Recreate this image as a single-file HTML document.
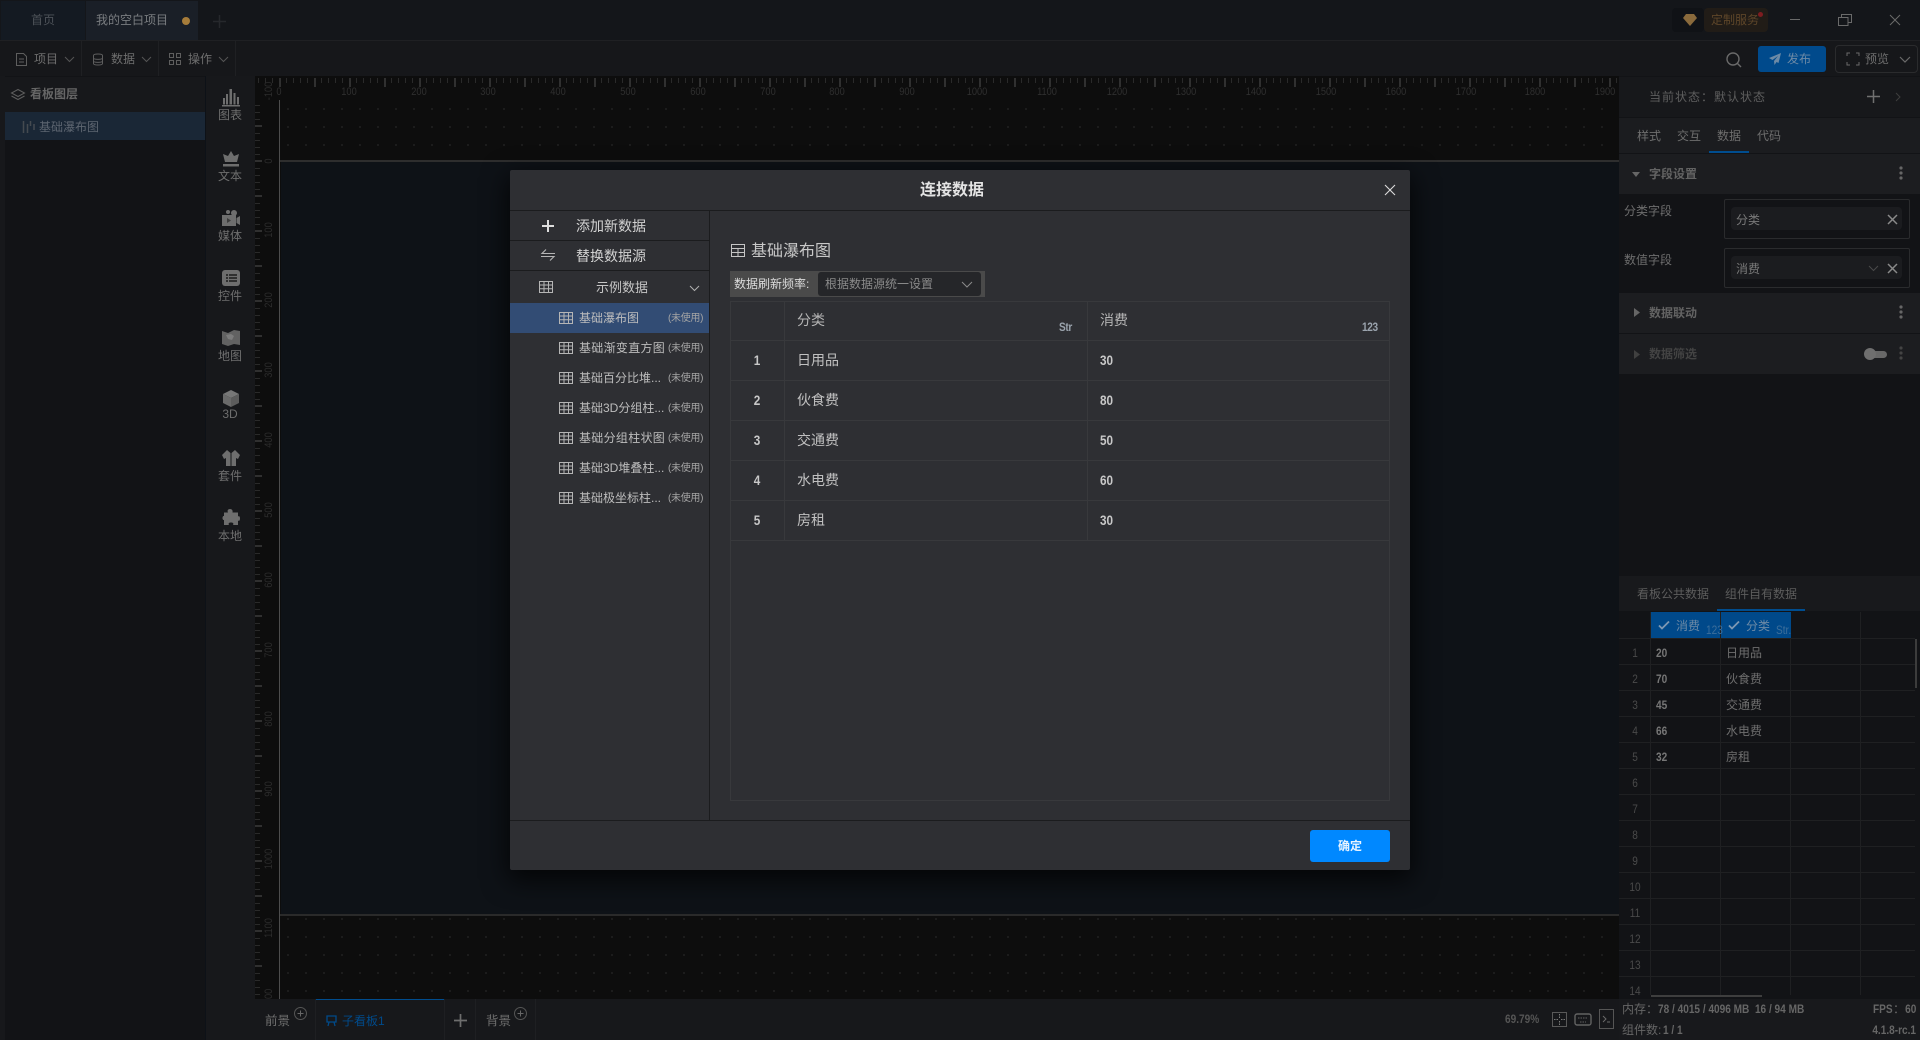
<!DOCTYPE html>
<html lang="zh"><head><meta charset="utf-8"><title>连接数据</title>
<style>
html,body{margin:0;padding:0;width:1920px;height:1040px;overflow:hidden;background:#0d1117}
body{position:relative;font-family:"Liberation Sans","Noto Sans CJK SC",sans-serif;font-size:12px;color:#6e6e6e}
.b{position:absolute}
.t{position:absolute;white-space:nowrap;line-height:20px;margin-top:-10px}
.c{transform:translateX(-50%)}
.n{transform:scaleX(.84);transform-origin:left center}
.c.n{transform:translateX(-50%) scaleX(.84);transform-origin:center}
.e{transform:scaleX(.84);transform-origin:right center}
.m{font-weight:700}
.r{position:absolute;white-space:nowrap;font-size:11px;line-height:12px;color:#2f2f2f;transform:translateX(-50%) scaleX(.84)}
.rv{position:absolute;left:269px;white-space:nowrap;font-size:11px;line-height:12px;color:#2c2c2c;transform:translate(-50%,-50%) rotate(-90deg) scaleX(.84)}
svg{position:absolute;overflow:visible}
.u{color:#bdbdbd;font-size:12px}
.un{color:#a5a5a5;font-size:10px;letter-spacing:-.3px;margin-top:-9px}
.num{color:#4a4a4a}
</style></head><body>

<!-- background panels -->
<div class="b" style="left:0;top:0;width:1920px;height:40px;background:#14161a"></div>
<div class="b" style="left:0;top:40px;width:1920px;height:1px;background:#1f2023"></div>
<div class="b" style="left:1px;top:1px;width:84px;height:39px;background:#141a22"></div>
<div class="b" style="left:86px;top:1px;width:112px;height:39px;background:#1a1f27"></div>
<div class="b" style="left:0;top:41px;width:1920px;height:35px;background:#16171a"></div>
<div class="b" style="left:81px;top:41px;width:1px;height:35px;background:#1f2023"></div>
<div class="b" style="left:158px;top:41px;width:1px;height:35px;background:#1f2023"></div>
<div class="b" style="left:235px;top:41px;width:1px;height:35px;background:#1f2023"></div>
<div class="b" style="left:0;top:76px;width:5px;height:964px;background:#17181b"></div>
<div class="b" style="left:5px;top:76px;width:200px;height:964px;background:#121316"></div>
<div class="b" style="left:5px;top:77px;width:200px;height:35px;background:#17181b"></div>
<div class="b" style="left:5px;top:112px;width:200px;height:28px;background:#1a2736"></div>
<div class="b" style="left:206px;top:76px;width:49px;height:964px;background:#17181b"></div>
<div class="b" style="left:255px;top:76px;width:1364px;height:923px;background:#0d0d0d"></div>
<div class="b" style="left:281px;top:162px;width:1338px;height:752px;background:#0e1217"></div>
<div class="b" style="left:255px;top:999px;width:1364px;height:41px;background:#17181b"></div>
<div class="b" style="left:1619px;top:76px;width:301px;height:964px;background:#121316"></div>

<svg style="left:0;top:0" width="1920" height="1040">
<defs>
<pattern id="tx" x="279" y="76" width="35" height="24" patternUnits="userSpaceOnUse">
<rect x="0" y="2" width="2" height="9" fill="#303030"/><rect x="7" y="2" width="1" height="5" fill="#2a2a2a"/><rect x="14" y="2" width="1" height="5" fill="#2a2a2a"/><rect x="21" y="2" width="1" height="5" fill="#2a2a2a"/><rect x="28" y="2" width="1" height="5" fill="#2a2a2a"/>
</pattern>
<pattern id="ty" x="255" y="161" width="25" height="35" patternUnits="userSpaceOnUse">
<rect x="0" y="-1" width="7" height="2" fill="#303030"/><rect x="0" y="34" width="7" height="2" fill="#303030"/><rect x="0" y="7" width="5" height="1" fill="#2a2a2a"/><rect x="0" y="14" width="5" height="1" fill="#2a2a2a"/><rect x="0" y="21" width="5" height="1" fill="#2a2a2a"/><rect x="0" y="28" width="5" height="1" fill="#2a2a2a"/>
</pattern>
<pattern id="dt" x="287" y="108" width="18" height="18" patternUnits="userSpaceOnUse"><rect width="2" height="2" fill="#1c1c1c"/></pattern>
<g id="grid"><path d="M.5 .5h13v11H.5zM.5 4h13M.5 7.7h13M5 .5v11M9.500 .5v11" fill="none" stroke="#b5b5b5" stroke-width="1"/></g>
<path id="cv" d="M0 0l4.500 4.500L9 0" fill="none" stroke-width="1"/>
</defs>
<rect x="255" y="76" width="1364" height="24" fill="url(#tx)"/>
<rect x="255" y="100" width="25" height="899" fill="url(#ty)"/>
<rect x="281" y="101" width="1338" height="59" fill="url(#dt)"/>
<rect x="281" y="916" width="1338" height="83" fill="url(#dt)"/>
<rect x="279" y="100" width="1" height="899" fill="#4d4d4d"/>
<rect x="280" y="160" width="1339" height="2" fill="#2e2e2e"/>
<rect x="280" y="914" width="1339" height="2" fill="#2a2a2a"/>
</svg>

<!-- rulers text -->
<span class="r" style="left:279px;top:86px">0</span><span class="r" style="left:349px;top:86px">100</span><span class="r" style="left:419px;top:86px">200</span><span class="r" style="left:488px;top:86px">300</span><span class="r" style="left:558px;top:86px">400</span><span class="r" style="left:628px;top:86px">500</span><span class="r" style="left:698px;top:86px">600</span><span class="r" style="left:768px;top:86px">700</span><span class="r" style="left:837px;top:86px">800</span><span class="r" style="left:907px;top:86px">900</span><span class="r" style="left:977px;top:86px">1000</span><span class="r" style="left:1047px;top:86px">1100</span><span class="r" style="left:1117px;top:86px">1200</span><span class="r" style="left:1186px;top:86px">1300</span><span class="r" style="left:1256px;top:86px">1400</span><span class="r" style="left:1326px;top:86px">1500</span><span class="r" style="left:1396px;top:86px">1600</span><span class="r" style="left:1466px;top:86px">1700</span><span class="r" style="left:1535px;top:86px">1800</span><span class="r" style="left:1605px;top:86px">1900</span>
<span class="rv" style="top:91px">-100</span><span class="rv" style="top:161px">0</span><span class="rv" style="top:230px">100</span><span class="rv" style="top:300px">200</span><span class="rv" style="top:370px">300</span><span class="rv" style="top:440px">400</span><span class="rv" style="top:510px">500</span><span class="rv" style="top:580px">600</span><span class="rv" style="top:650px">700</span><span class="rv" style="top:719px">800</span><span class="rv" style="top:789px">900</span><span class="rv" style="top:859px">1000</span><span class="rv" style="top:928px">1100</span>
<div class="b" style="left:260px;top:985px;width:18px;height:14px;overflow:hidden"><span class="rv" style="left:9px;top:14px">1200</span></div>

<!-- top bar -->
<span class="t" style="left:31px;top:20px;color:#4d5258">首页</span>
<span class="t" style="left:96px;top:20px;color:#7a7d80">我的空白项目</span>
<div class="b" style="left:182px;top:17px;width:8px;height:8px;border-radius:50%;background:#a67c3a"></div>
<svg style="left:213px;top:15px" width="13" height="13"><path d="M6.500 0v13M0 6.500h13" stroke="#26282c" stroke-width="1.500"/></svg>
<div class="b" style="left:1672px;top:8px;width:32px;height:24px;background:#101216;border-radius:4px"></div>
<div class="b" style="left:1704px;top:8px;width:64px;height:24px;background:#211c17;border-radius:4px"></div>
<svg style="left:1683px;top:14px" width="14" height="12"><path d="M3 0h8l3 4-7 8-7-8z" fill="#8a6a3c"/></svg>
<span class="t" style="left:1711px;top:20px;color:#5e4629">定制服务</span>
<div class="b" style="left:1758px;top:12px;width:5px;height:5px;border-radius:50%;background:#7e1c20"></div>
<svg style="left:1790px;top:19px" width="10" height="2"><path d="M0 .5h10" stroke="#6a6a6a"/></svg>
<svg style="left:1838px;top:14px" width="14" height="12"><path d="M.5 3.500h9.500v8H.5zM3.500 3.500V.5h10v8H10" fill="none" stroke="#6a6a6a"/></svg>
<svg style="left:1890px;top:15px" width="10" height="10"><path d="M0 0l10 10M10 0L0 10" stroke="#6a6a6a"/></svg>

<!-- toolbar -->
<svg style="left:16px;top:53px" width="11" height="13"><path d="M.5 .5h7l3 3v9H.5zM3 6h5M3 9h5" fill="none" stroke="#5e5e5e"/></svg>
<span class="t" style="left:34px;top:59px">项目</span>
<svg style="left:65px;top:57px" width="9" height="5"><use href="#cv" stroke="#555"/></svg>
<svg style="left:93px;top:53px" width="10" height="13"><path d="M.5 2.500C.5 .5 9.500 .5 9.500 2.500v8c0 2-9 2-9 0zM.5 5c0 1.800 9 1.800 9 0M.5 8c0 1.800 9 1.800 9 0" fill="none" stroke="#5e5e5e"/></svg>
<span class="t" style="left:111px;top:59px">数据</span>
<svg style="left:142px;top:57px" width="9" height="5"><use href="#cv" stroke="#555"/></svg>
<svg style="left:169px;top:53px" width="12" height="12"><path d="M.5 .5h4v4h-4zM7.500 .5h4v4h-4zM.5 7.500h4v4h-4zM7.500 7.500h4v4h-4z" fill="none" stroke="#5e5e5e"/></svg>
<span class="t" style="left:188px;top:59px">操作</span>
<svg style="left:219px;top:57px" width="9" height="5"><use href="#cv" stroke="#555"/></svg>
<svg style="left:1726px;top:52px" width="16" height="16"><circle cx="7" cy="7" r="6" fill="none" stroke="#6a6a6a" stroke-width="1.400"/><path d="M11.500 11.500L15 15" stroke="#6a6a6a" stroke-width="1.400"/></svg>
<div class="b" style="left:1758px;top:46px;width:68px;height:26px;background:#004a8c;border-radius:3px"></div>
<svg style="left:1769px;top:53px" width="12" height="12"><path d="M12 0L0 5l3.500 2L9 3 5 8l.5 4 2-3 2 1z" fill="#6d8aa6"/></svg>
<span class="t" style="left:1787px;top:59px;font-size:12px;color:#6d8aa6">发布</span>
<div class="b" style="left:1835px;top:45px;width:81px;height:26px;border:1px solid #2a2b2d;border-radius:4px"></div>
<svg style="left:1847px;top:53px" width="12" height="12"><path d="M0 3V0h3M9 0h3v3M12 9v3H9M3 12H0V9" fill="none" stroke="#6a6a6a"/></svg>
<span class="t" style="left:1865px;top:59px">预览</span>
<svg style="left:1900px;top:57px" width="10" height="6"><path d="M0 0l5 5 5-5" fill="none" stroke="#6a6a6a" stroke-width="1.200"/></svg>

<!-- left panel -->
<svg style="left:11px;top:89px" width="14" height="12"><path d="M7 .5l6.500 3.500L7 7.500.5 4zM.5 7L7 10.500 13.500 7" fill="none" stroke="#5e5e5e"/></svg>
<span class="t m" style="left:30px;top:94px;color:#666">看板图层</span>
<svg style="left:23px;top:121px" width="12" height="12"><path d="M.5 0v12M4.500 3v9M7.500 0v5M11 3v6" fill="none" stroke="#454a50" stroke-width="1.500"/></svg>
<span class="t" style="left:39px;top:127px;color:#5d6570">基础瀑布图</span>

<!-- side icons -->
<svg style="left:222px;top:89px" width="18" height="18" fill="#6e6e6e"><path d="M0 16h18v1.500H0zM1 9h2v6.500H1zM4 5h2v10.500H4zM7.500 0h2.500v15.500H7.500zM11.500 4h2v11.500h-2zM15 8h2v7.500h-2z"/></svg>
<span class="t c" style="left:230px;top:115px">图表</span>
<svg style="left:222px;top:151px" width="18" height="16" fill="#6e6e6e"><path d="M9 0l3 5 5-2-2 8H3L1 3l5 2zM1 13h16v2.500H1z"/></svg>
<span class="t c" style="left:230px;top:176px">文本</span>
<svg style="left:222px;top:209px" width="18" height="17" fill="#6e6e6e"><circle cx="12" cy="4" r="3"/><circle cx="6" cy="3" r="2"/><path d="M0 6h14v11H0zM14.500 9l3.500-2v9l-3.500-2z"/><path d="M5 9v5l4-2.500z" fill="#3d3d3d"/></svg>
<span class="t c" style="left:230px;top:236px">媒体</span>
<svg style="left:222px;top:270px" width="18" height="16" fill="#6e6e6e"><rect width="18" height="16" rx="3"/><path d="M4 4h2v2H4zM7 4h8v2H7zM4 7h2v2H4zM7 7h8v2H7zM4 10h2v2H4zM7 10h8v2H7z" fill="#303030"/></svg>
<span class="t c" style="left:230px;top:296px">控件</span>
<svg style="left:222px;top:329px" width="18" height="17" fill="#626262"><path d="M0 2l6 2 6-3 6 1v14l-6-1-6 2-6-2z"/><path d="M4 6l5-1 3 2-2 4-4-1z" fill="#7c7c7c"/></svg>
<span class="t c" style="left:230px;top:356px">地图</span>
<svg style="left:223px;top:390px" width="16" height="17"><path d="M8 0l8 4-8 4-8-4z" fill="#777"/><path d="M0 4l8 4v9l-8-4z" fill="#6a6a6a"/><path d="M16 4L8 8v9l8-4z" fill="#5c5c5c"/></svg>
<span class="t c" style="left:230px;top:414px">3D</span>
<svg style="left:222px;top:450px" width="18" height="16" fill="#6e6e6e"><path d="M5 0l3.500 3V16H4V8L2 9 0 5zM13 0l-3.500 3V16H14V8l2 1 2-4z"/></svg>
<span class="t c" style="left:230px;top:476px">套件</span>
<svg style="left:222px;top:509px" width="18" height="17" fill="#6e6e6e"><path d="M8 0c2 0 3 1.500 2.500 3.500H16v4c1-1 2 0 2 2s-1 3-2 2v4.500H11c1-1.500 0-2.500-2-2.500s-3 1-2 2.500H2V11c-2 .5-2-4.500 0-4V3.500h4C5 1.500 6 0 8 0z"/></svg>
<span class="t c" style="left:230px;top:536px">本地</span>

<!-- right panel -->
<div class="b" style="left:1619px;top:77px;width:301px;height:40px;background:#17181b"></div>
<div class="b" style="left:1619px;top:118px;width:301px;height:35px;background:#1b1c1f"></div>
<div class="b" style="left:1619px;top:154px;width:301px;height:40px;background:#1c1d20"></div>
<div class="b" style="left:1619px;top:293px;width:301px;height:40px;background:#1c1d20"></div>
<div class="b" style="left:1619px;top:334px;width:301px;height:40px;background:#1c1d20"></div>
<div class="b" style="left:1619px;top:576px;width:301px;height:35px;background:#18191c"></div>
<span class="t" style="left:1649px;top:97px;letter-spacing:1px;color:#5e5e5e">当前状态：默认状态</span>
<svg style="left:1867px;top:90px" width="13" height="13"><path d="M6.500 0v13M0 6.500h13" stroke="#707070" stroke-width="1.500"/></svg>
<svg style="left:1896px;top:93px" width="4" height="8"><path d="M0 0l4 4-4 4" fill="none" stroke="#3e3e3e"/></svg>
<span class="t" style="left:1637px;top:136px">样式</span><span class="t" style="left:1677px;top:136px">交互</span><span class="t" style="left:1717px;top:136px">数据</span><span class="t" style="left:1757px;top:136px">代码</span>
<div class="b" style="left:1709px;top:151px;width:40px;height:2px;background:#004d8f"></div>
<svg style="left:1632px;top:172px" width="8" height="5"><path d="M0 0h8L4 5z" fill="#666"/></svg>
<span class="t m" style="left:1649px;top:174px;color:#636363">字段设置</span>
<svg style="left:1899px;top:166px" width="4" height="14" fill="#666"><circle cx="2" cy="2" r="1.600"/><circle cx="2" cy="7" r="1.600"/><circle cx="2" cy="12" r="1.600"/></svg>
<span class="t" style="left:1624px;top:211px">分类字段</span>
<span class="t" style="left:1624px;top:260px">数值字段</span>
<div class="b" style="left:1724px;top:199px;width:184px;height:38px;border:1px solid #2a2b2d;border-radius:2px"></div>
<div class="b" style="left:1731px;top:207px;width:171px;height:23px;background:#1b1c1f;border-radius:4px"></div>
<span class="t" style="left:1736px;top:220px;color:#7a7a7a">分类</span>
<svg style="left:1888px;top:215px" width="9" height="9"><path d="M0 0l9 9M9 0L0 9" stroke="#8a8a8a" stroke-width="1.500"/></svg>
<div class="b" style="left:1724px;top:248px;width:184px;height:38px;border:1px solid #2a2b2d;border-radius:2px"></div>
<div class="b" style="left:1731px;top:256px;width:171px;height:23px;background:#1b1c1f;border-radius:4px"></div>
<span class="t" style="left:1736px;top:269px;color:#7a7a7a">消费</span>
<svg style="left:1869px;top:266px" width="9" height="5"><use href="#cv" stroke="#4a4a4a"/></svg>
<svg style="left:1888px;top:264px" width="9" height="9"><path d="M0 0l9 9M9 0L0 9" stroke="#8a8a8a" stroke-width="1.500"/></svg>
<svg style="left:1634px;top:308px" width="6" height="9"><path d="M0 0v9l6-4.500z" fill="#666"/></svg>
<span class="t m" style="left:1649px;top:313px;color:#636363">数据联动</span>
<svg style="left:1899px;top:305px" width="4" height="14" fill="#666"><circle cx="2" cy="2" r="1.600"/><circle cx="2" cy="7" r="1.600"/><circle cx="2" cy="12" r="1.600"/></svg>
<svg style="left:1634px;top:350px" width="6" height="9"><path d="M0 0v9l6-4.500z" fill="#404040"/></svg>
<span class="t m" style="left:1649px;top:354px;color:#434343">数据筛选</span>
<div class="b" style="left:1865px;top:351px;width:22px;height:7px;background:#686868;border-radius:4px"></div>
<div class="b" style="left:1864px;top:348px;width:12px;height:12px;background:#6f6f6f;border-radius:50%"></div>
<svg style="left:1899px;top:346px" width="4" height="14" fill="#444"><circle cx="2" cy="2" r="1.600"/><circle cx="2" cy="7" r="1.600"/><circle cx="2" cy="12" r="1.600"/></svg>

<span class="t" style="left:1637px;top:594px;color:#5d5d5d">看板公共数据</span><span class="t" style="left:1725px;top:594px;color:#5d5d5d">组件自有数据</span>
<div class="b" style="left:1717px;top:609px;width:88px;height:2px;background:#004d8f"></div>

<!-- data grid -->
<svg style="left:0;top:0" width="1920" height="1040">
<path d="M1619 638.500h296M1619 664.500h296M1619 690.500h296M1619 716.500h296M1619 742.500h296M1619 768.500h296M1619 794.500h296M1619 820.500h296M1619 846.500h296M1619 872.500h296M1619 898.500h296M1619 924.500h296M1619 950.500h296M1619 976.500h296M1650.500 612v383M1720.500 612v383M1790.500 612v383M1860.500 612v383" stroke="#1f2022" fill="none"/>
<rect x="1651" y="612" width="69" height="26" fill="#00498a"/><rect x="1721" y="612" width="70" height="26" fill="#00498a"/>
<path d="M1659 625.500l3 3 7-7M1729 625.500l3 3 7-7" fill="none" stroke="#7d98b3" stroke-width="1.800"/>
<rect x="1915" y="639" width="2" height="49" fill="#3c3c3c"/>
<rect x="1651" y="995" width="111" height="2" fill="#3e3e3e"/>
</svg>
<span class="t" style="left:1676px;top:626px;color:#6d8aa6">消费</span><span class="t n" style="left:1706px;top:630px;color:#3d6f9b">123</span>
<span class="t" style="left:1746px;top:626px;color:#6d8aa6">分类</span><span class="t n" style="left:1776px;top:630px;color:#3d6f9b">Str.</span>
<span class="t c n num" style="left:1635px;top:653px">1</span><span class="t c n num" style="left:1635px;top:679px">2</span><span class="t c n num" style="left:1635px;top:705px">3</span><span class="t c n num" style="left:1635px;top:731px">4</span><span class="t c n num" style="left:1635px;top:757px">5</span><span class="t c n num" style="left:1635px;top:783px">6</span><span class="t c n num" style="left:1635px;top:809px">7</span><span class="t c n num" style="left:1635px;top:835px">8</span><span class="t c n num" style="left:1635px;top:861px">9</span><span class="t c n num" style="left:1635px;top:887px">10</span><span class="t c n num" style="left:1635px;top:913px">11</span><span class="t c n num" style="left:1635px;top:939px">12</span><span class="t c n num" style="left:1635px;top:965px">13</span><span class="t c n num" style="left:1635px;top:991px">14</span>
<span class="t n m" style="left:1656px;top:653px;color:#777">20</span><span class="t n m" style="left:1656px;top:679px;color:#777">70</span><span class="t n m" style="left:1656px;top:705px;color:#777">45</span><span class="t n m" style="left:1656px;top:731px;color:#777">66</span><span class="t n m" style="left:1656px;top:757px;color:#777">32</span>
<span class="t" style="left:1726px;top:653px">日用品</span><span class="t" style="left:1726px;top:679px">伙食费</span><span class="t" style="left:1726px;top:705px">交通费</span><span class="t" style="left:1726px;top:731px">水电费</span><span class="t" style="left:1726px;top:757px">房租</span>

<!-- status -->
<div class="b" style="left:1619px;top:999px;width:301px;height:41px;background:#18191c"></div>
<span class="t" style="left:1622px;top:1009px;color:#666">内存：</span>
<span class="t n m" style="left:1658px;top:1009px;color:#666">78 / 4015 / 4096 MB&nbsp; 16 / 94 MB</span>
<span class="t n m" style="left:1873px;top:1009px;color:#666">FPS</span><span class="t" style="left:1893px;top:1009px;color:#666">：</span>
<span class="t e m" style="right:4px;top:1009px;color:#666">60</span>
<span class="t" style="left:1622px;top:1030px;color:#666">组件数:</span>
<span class="t n m" style="left:1663px;top:1030px;color:#666">1 / 1</span>
<span class="t e m" style="right:4px;top:1030px;color:#666">4.1.8-rc.1</span>

<!-- bottom bar -->
<div class="b" style="left:315px;top:999px;width:129px;height:1px;background:#004d8f"></div>
<div class="b" style="left:315px;top:999px;width:1px;height:41px;background:#1e1f22"></div>
<div class="b" style="left:444px;top:999px;width:1px;height:41px;background:#1e1f22"></div>
<div class="b" style="left:475px;top:999px;width:1px;height:41px;background:#1e1f22"></div>
<div class="b" style="left:535px;top:999px;width:1px;height:41px;background:#1e1f22"></div>
<span class="t" style="left:265px;top:1021px;font-size:12.500px">前景</span>
<svg style="left:294px;top:1007px" width="13" height="13"><circle cx="6.500" cy="6.500" r="6" fill="none" stroke="#555"/><path d="M6.500 3.500v6M3.500 6.500h6" stroke="#666"/></svg>
<svg style="left:326px;top:1015px" width="11" height="12"><path d="M1 1h9v6H1zM3 7l-1 4M8 7l1 4" fill="none" stroke="#004a8a" stroke-width="1.300"/></svg>
<span class="t" style="left:342px;top:1021px;color:#004a8a">子看板1</span>
<svg style="left:454px;top:1014px" width="13" height="13"><path d="M6.500 0v13M0 6.500h13" stroke="#6e6e6e" stroke-width="1.700"/></svg>
<span class="t" style="left:486px;top:1021px;font-size:12.500px">背景</span>
<svg style="left:514px;top:1007px" width="13" height="13"><circle cx="6.500" cy="6.500" r="6" fill="none" stroke="#555"/><path d="M6.500 3.500v6M3.500 6.500h6" stroke="#666"/></svg>
<span class="t n m" style="left:1505px;top:1019px;color:#555">69.79%</span>
<svg style="left:1552px;top:1012px" width="15" height="15"><rect x=".5" y=".5" width="14" height="14" fill="none" stroke="#595959"/><path d="M7.500 2v4M7.500 9v4M2 7.500h4M9 7.500h4" stroke="#7a7a7a" stroke-dasharray="1.500 1"/></svg>
<svg style="left:1574px;top:1013px" width="18" height="13"><rect x="1" y="1" width="16" height="11" rx="2" fill="none" stroke="#626262" stroke-width="1.400"/><path d="M4 5h10M6 9h6" stroke="#626262" stroke-dasharray="1.500 1"/></svg>
<svg style="left:1599px;top:1009px" width="15" height="20"><rect x=".5" y=".5" width="14" height="19" fill="none" stroke="#555"/><path d="M4 7l3 3-3 3M8 13h3" fill="none" stroke="#6a6a6a"/></svg>

<!-- modal -->
<div class="b" style="left:510px;top:170px;width:900px;height:700px;background:#2e2f33;border-radius:2px;box-shadow:0 8px 26px 2px rgba(0,0,0,.75)"></div>
<div class="b" style="left:510px;top:210px;width:900px;height:1px;background:#1b1c1e"></div>
<div class="b" style="left:709px;top:211px;width:1px;height:609px;background:#1b1c1e"></div>
<div class="b" style="left:510px;top:820px;width:900px;height:1px;background:#1b1c1e"></div>
<div class="b" style="left:510px;top:240px;width:199px;height:1px;background:#1b1c1e"></div>
<div class="b" style="left:510px;top:270px;width:199px;height:1px;background:#1b1c1e"></div>
<span class="t" style="left:920px;top:191px;font-size:16px;font-weight:700;color:#e4e4e4">连接数据</span>
<svg style="left:1385px;top:185px" width="10" height="10"><path d="M0 0l10 10M10 0L0 10" stroke="#dcdcdc" stroke-width="1.100"/></svg>

<svg style="left:542px;top:220px" width="12" height="12"><path d="M6 0v12M0 6h12" stroke="#dedede" stroke-width="2"/></svg>
<span class="t" style="left:576px;top:226px;font-size:14px;color:#d2d2d2">添加新数据</span>
<svg style="left:541px;top:249px" width="14" height="12"><path d="M14 4.500H1L5 .5M0 7.500h13L9 11.500" fill="none" stroke="#b5b5b5" stroke-width="1.100"/></svg>
<span class="t" style="left:576px;top:256px;font-size:14px;color:#d2d2d2">替换数据源</span>
<svg style="left:539px;top:281px" width="14" height="12"><use href="#grid"/></svg>
<span class="t" style="left:596px;top:288px;font-size:13px;color:#c5c5c5">示例数据</span>
<svg style="left:690px;top:286px" width="9" height="5"><use href="#cv" stroke="#b0b0b0"/></svg>

<div class="b" style="left:510px;top:303px;width:199px;height:30px;background:#324c74"></div>
<svg style="left:559px;top:312px" width="14" height="12"><use href="#grid"/></svg><span class="t u" style="left:579px;top:318px">基础瀑布图</span><span class="t un" style="left:668px;top:318px">(未使用)</span>
<svg style="left:559px;top:342px" width="14" height="12"><use href="#grid"/></svg><span class="t u" style="left:579px;top:348px;letter-spacing:.3px">基础渐变直方图</span><span class="t un" style="left:668px;top:348px">(未使用)</span>
<svg style="left:559px;top:372px" width="14" height="12"><use href="#grid"/></svg><span class="t u" style="left:579px;top:378px">基础百分比堆...</span><span class="t un" style="left:668px;top:378px">(未使用)</span>
<svg style="left:559px;top:402px" width="14" height="12"><use href="#grid"/></svg><span class="t u" style="left:579px;top:408px">基础3D分组柱...</span><span class="t un" style="left:668px;top:408px">(未使用)</span>
<svg style="left:559px;top:432px" width="14" height="12"><use href="#grid"/></svg><span class="t u" style="left:579px;top:438px;letter-spacing:.3px">基础分组柱状图</span><span class="t un" style="left:668px;top:438px">(未使用)</span>
<svg style="left:559px;top:462px" width="14" height="12"><use href="#grid"/></svg><span class="t u" style="left:579px;top:468px">基础3D堆叠柱...</span><span class="t un" style="left:668px;top:468px">(未使用)</span>
<svg style="left:559px;top:492px" width="14" height="12"><use href="#grid"/></svg><span class="t u" style="left:579px;top:498px">基础极坐标柱...</span><span class="t un" style="left:668px;top:498px">(未使用)</span>

<svg style="left:731px;top:244px" width="14" height="13"><path d="M.5 .5h13v12H.5zM.5 4.500h13M.5 8.500h13M7 4.500v8" fill="none" stroke="#c5c5c5"/></svg>
<span class="t" style="left:751px;top:252px;font-size:16px;color:#c8c8c8">基础瀑布图</span>
<div class="b" style="left:730px;top:271px;width:255px;height:26px;background:#4a4a4a"></div>
<div class="b" style="left:818px;top:272px;width:163px;height:24px;background:#252629;border-radius:3px"></div>
<span class="t" style="left:734px;top:284px;color:#dcdcdc">数据刷新频率:</span>
<span class="t" style="left:825px;top:284px;color:#8a8a8a">根据数据源统一设置</span>
<svg style="left:962px;top:282px" width="10" height="6"><path d="M0 0l5 5 5-5" fill="none" stroke="#8a8a8a"/></svg>

<svg style="left:0;top:0" width="1920" height="1040">
<path d="M730.500 301.500h659v499h-659zM730.500 340.500h659M730.500 380.500h659M730.500 420.500h659M730.500 460.500h659M730.500 500.500h659M730.500 540.500h659M784.500 301v239M1087.500 301v239" fill="none" stroke="#38393c"/>
</svg>
<span class="t" style="left:797px;top:320px;font-size:14px;color:#b5b5b5">分类</span>
<span class="t" style="left:1100px;top:320px;font-size:14px;color:#b5b5b5">消费</span>
<span class="t n m" style="left:1059px;top:327px;color:#9aa3ad;letter-spacing:-.4px">Str</span>
<span class="t n m" style="left:1362px;top:327px;color:#9aa3ad;letter-spacing:-.4px">123</span>
<span class="t c n m" style="left:757px;top:360px;font-size:14px;color:#c8c8c8">1</span><span class="t c n m" style="left:757px;top:400px;font-size:14px;color:#c8c8c8">2</span><span class="t c n m" style="left:757px;top:440px;font-size:14px;color:#c8c8c8">3</span><span class="t c n m" style="left:757px;top:480px;font-size:14px;color:#c8c8c8">4</span><span class="t c n m" style="left:757px;top:520px;font-size:14px;color:#c8c8c8">5</span>
<span class="t" style="left:797px;top:360px;font-size:14px;color:#c0c0c0">日用品</span><span class="t" style="left:797px;top:400px;font-size:14px;color:#c0c0c0">伙食费</span><span class="t" style="left:797px;top:440px;font-size:14px;color:#c0c0c0">交通费</span><span class="t" style="left:797px;top:480px;font-size:14px;color:#c0c0c0">水电费</span><span class="t" style="left:797px;top:520px;font-size:14px;color:#c0c0c0">房租</span>
<span class="t n m" style="left:1100px;top:360px;font-size:14px;color:#c8c8c8">30</span><span class="t n m" style="left:1100px;top:400px;font-size:14px;color:#c8c8c8">80</span><span class="t n m" style="left:1100px;top:440px;font-size:14px;color:#c8c8c8">50</span><span class="t n m" style="left:1100px;top:480px;font-size:14px;color:#c8c8c8">60</span><span class="t n m" style="left:1100px;top:520px;font-size:14px;color:#c8c8c8">30</span>

<div class="b" style="left:1310px;top:830px;width:80px;height:32px;background:#0088ff;border-radius:3px"></div>
<span class="t c m" style="left:1350px;top:846px;color:#e8f3ff">确定</span>

</body></html>
